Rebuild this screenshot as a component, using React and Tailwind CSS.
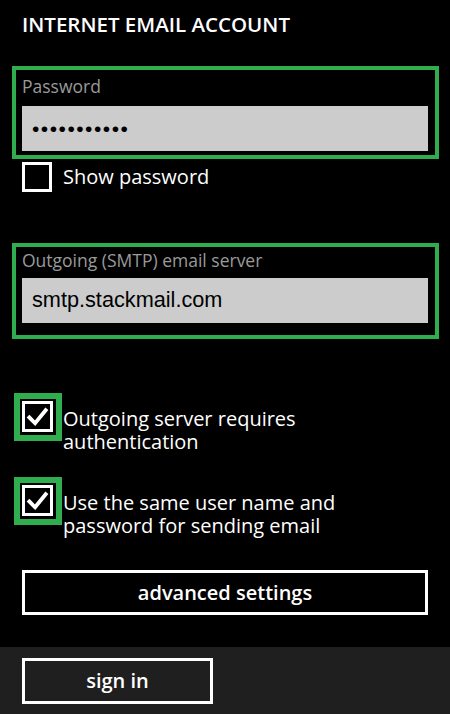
import React from "react";

function Check() {
  return (
    <svg viewBox="0 0 26 26" className="w-[26px] h-[26px]">
      <polyline points="4.5,13.5 10.5,19.5 21.5,6" fill="none" stroke="#ffffff" strokeWidth="4" strokeLinecap="square" strokeLinejoin="miter" />
    </svg>
  );
}

function CheckRow({ first, second, className }) {
  return (
    <div className={"flex items-start " + className}>
      <div className="ml-[14px] w-[48px] h-[48px] border-[6px] border-[#2fad4f] p-[2px] shrink-0">
        <div className="w-[31px] h-[31px] border-[3px] border-white flex items-center justify-center">
          <Check />
        </div>
      </div>
      <p className="ml-[1px] mt-[14px] text-[20px] leading-[23px] text-white">
        {first}
        <br />
        {second}
      </p>
    </div>
  );
}

export default function App() {
  return (
    <div className="w-[450px] h-[714px] bg-black flex flex-col font-['Open_Sans',sans-serif] overflow-hidden">
      <div className="pt-[10px] pl-[22px] text-[20.5px] leading-[28px] font-semibold text-white">
        INTERNET EMAIL ACCOUNT
      </div>

      <div className="mt-[28px] ml-[12px] w-[427px] h-[93px] border-4 border-[#2fad4f] flex flex-col">
        <div className="pt-[4px] pl-[6px] text-[17.5px] leading-[24px] text-[#9a9a9a]">Password</div>
        <div className="mt-[8px] ml-[6px] w-[406px] h-[45px] bg-[#cccccc] flex items-center pl-[10px] font-['Liberation_Sans',Arial,sans-serif] text-[21px] tracking-[1.5px] text-black">
          •••••••••••
        </div>
      </div>

      <div className="mt-[3px] flex items-center">
        <div className="ml-[22px] w-[30px] h-[30px] border-[3px] border-white shrink-0"></div>
        <div className="ml-[11px] text-[20px] leading-[28px] text-white">Show password</div>
      </div>

      <div className="mt-[51px] ml-[12px] w-[427px] h-[96px] border-4 border-[#2fad4f] flex flex-col">
        <div className="pt-[1px] pl-[6px] text-[17.5px] leading-[24px] text-[#9a9a9a]">Outgoing (SMTP) email server</div>
        <div className="mt-[6px] ml-[6px] w-[406px] h-[45px] bg-[#cccccc] flex items-center pl-[10px] font-['Liberation_Sans',Arial,sans-serif] text-[21.7px] text-black">
          smtp.stackmail.com
        </div>
      </div>

      <CheckRow className="mt-[54px]" first="Outgoing server requires" second="authentication" />
      <CheckRow className="mt-[24px]" first="Use the same user name and" second="password for sending email" />

      <div className="mt-[33px] ml-[22px] w-[406px] h-[45px] border-[3px] border-white flex items-center justify-center text-[20px] font-semibold text-white">
        advanced settings
      </div>

      <div className="mt-auto h-[67px] bg-[#1f1f1f] pt-[11px] pl-[22px]">
        <div className="w-[191px] h-[46px] border-[3px] border-white flex items-center justify-center text-[20px] font-semibold text-white">
          sign in
        </div>
      </div>
    </div>
  );
}
